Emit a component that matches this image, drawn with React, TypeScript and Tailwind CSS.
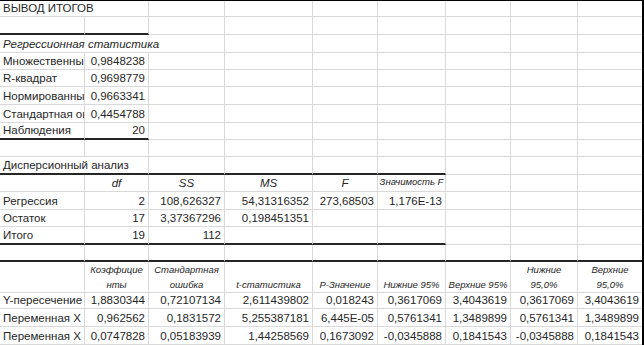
type Align = "left" | "right" | "center";

interface CellDef {
  text?: React.ReactNode;
  align?: Align;
  italic?: boolean;
  small?: boolean;
  span?: string;
  thick?: boolean;
  top?: string;
}

interface RowDef {
  h: string;
  cells: CellDef[];
}

const cols =
  "grid grid-cols-[85px_64px_76px_88px_65px_68px_65px_67px_65px]";

const e = (n: number, thick = false): CellDef[] =>
  Array.from({ length: n }, () => ({ thick }));

const num = (text: string, thick = false): CellDef => ({
  text,
  align: "right",
  thick,
});

const head = (text: React.ReactNode): CellDef => ({
  text,
  align: "center",
  italic: true,
  small: true,
});

// coefficient table headers hang from the top: two-line ones start at the top, one-line ones drop a line
const head2 = (text: React.ReactNode, top: string): CellDef => ({
  ...head(text),
  top,
});

const rows: RowDef[] = [
  { h: "h-[16px]", cells: [{ text: "ВЫВОД ИТОГОВ", span: "col-span-2" }, ...e(7)] },
  { h: "h-[18px]", cells: [...e(2, true), ...e(7)] },
  {
    h: "h-[18px]",
    cells: [{ text: "Регрессионная статистика", italic: true, span: "col-span-3" }, ...e(6)],
  },
  { h: "h-[17px]", cells: [{ text: "Множественный R" }, num("0,9848238"), ...e(7)] },
  { h: "h-[17px]", cells: [{ text: "R-квадрат" }, num("0,9698779"), ...e(7)] },
  { h: "h-[18px]", cells: [{ text: "Нормированный R-квадрат" }, num("0,9663341"), ...e(7)] },
  { h: "h-[18px]", cells: [{ text: "Стандартная ошибка" }, num("0,4454788"), ...e(7)] },
  { h: "h-[17px]", cells: [{ text: "Наблюдения", thick: true }, num("20", true), ...e(7)] },
  { h: "h-[17px]", cells: e(9) },
  {
    h: "h-[18px]",
    cells: [{ text: "Дисперсионный анализ", span: "col-span-2", thick: true }, ...e(4, true), ...e(3)],
  },
  {
    h: "h-[17px]",
    cells: [
      {},
      { text: "df", align: "center", italic: true },
      { text: "SS", align: "center", italic: true },
      { text: "MS", align: "center", italic: true },
      { text: "F", align: "center", italic: true },
      head("Значимость F"),
      ...e(3),
    ],
  },
  {
    h: "h-[18px]",
    cells: [
      { text: "Регрессия" },
      num("2"),
      num("108,626327"),
      num("54,31316352"),
      num("273,68503"),
      num("1,176E-13"),
      ...e(3),
    ],
  },
  {
    h: "h-[17px]",
    cells: [{ text: "Остаток" }, num("17"), num("3,37367296"), num("0,198451351"), ...e(5)],
  },
  {
    h: "h-[18px]",
    cells: [
      { text: "Итого", thick: true },
      num("19", true),
      num("112", true),
      ...e(3, true),
      ...e(3),
    ],
  },
  { h: "h-[17px]", cells: e(9, true) },
  {
    h: "h-[29px]",
    cells: [
      {},
      head2(<>Коэффицие<br />нты</>, "pt-0"),
      head2(<>Стандартная<br />ошибка</>, "pt-0"),
      head2("t-статистика", "pt-[15px]"),
      head2("P-Значение", "pt-[15px]"),
      head2("Нижние 95%", "pt-[15px]"),
      head2("Верхние 95%", "pt-[15px]"),
      head2(<>Нижние<br />95,0%</>, "pt-0"),
      head2(<>Верхние<br />95,0%</>, "pt-0"),
    ],
  },
  {
    h: "h-[18px]",
    cells: [
      { text: "Y-пересечение" },
      num("1,8830344"),
      num("0,72107134"),
      num("2,611439802"),
      num("0,018243"),
      num("0,3617069"),
      num("3,4043619"),
      num("0,3617069"),
      num("3,4043619"),
    ],
  },
  {
    h: "h-[18px]",
    cells: [
      { text: "Переменная X" },
      num("0,962562"),
      num("0,1831572"),
      num("5,255387181"),
      num("6,445E-05"),
      num("0,5761341"),
      num("1,3489899"),
      num("0,5761341"),
      num("1,3489899"),
    ],
  },
  {
    h: "h-[18px]",
    cells: [
      { text: "Переменная X" },
      num("0,0747828"),
      num("0,05183939"),
      num("1,44258569"),
      num("0,1673092"),
      num("-0,0345888"),
      num("0,1841543"),
      num("-0,0345888"),
      num("0,1841543"),
    ],
  },
];

const Cell = ({ text, align = "left", italic, small, span, thick, top }: CellDef) => {
  const alignClass =
    align === "right"
      ? "justify-end text-right pr-[3px]"
      : align === "center"
        ? "justify-center text-center"
        : "justify-start text-left pl-[3px]";

  return (
    <div
      className={[
        "flex whitespace-nowrap border-r border-r-[#d9d9d9]",
        top ? `items-start overflow-visible ${top}` : "items-end overflow-hidden pb-[1px]",
        thick ? "border-b-2 border-b-[#262626]" : "border-b border-b-[#d9d9d9]",
        span ?? "",
        alignClass,
        italic ? "italic" : "",
        top ? "text-[9.5px] leading-[15px]" : small ? "text-[9.5px] leading-[16px]" : "text-[11.5px] leading-[14px]",
      ].join(" ")}
    >
      {text}
    </div>
  );
};

export default function App() {
  return (
    <div className="w-[644px] h-[345px] overflow-hidden bg-white border-t border-t-black border-r-2 border-r-black font-['Liberation_Sans',Arial,sans-serif] text-[#262626]">
      {rows.map((row, i) => (
        <div key={i} className={`${cols} ${row.h}`}>
          {row.cells.map((c, j) => (
            <Cell key={j} {...c} />
          ))}
        </div>
      ))}
    </div>
  );
}
